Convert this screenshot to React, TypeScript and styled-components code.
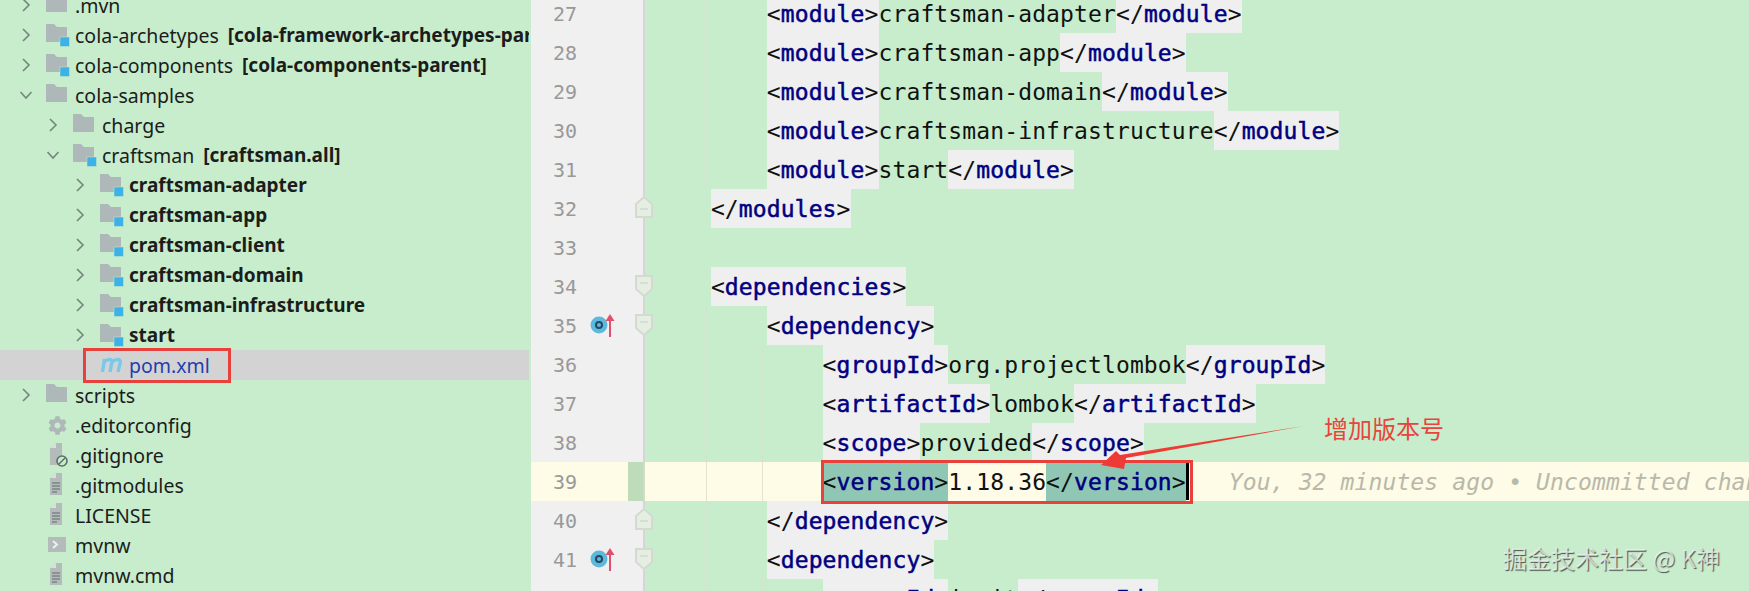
import React from "react";
import styled, { createGlobalStyle } from "styled-components";
import { FaCog } from "react-icons/fa";

const Global = createGlobalStyle`
  html, body { margin: 0; padding: 0; background: #c7edcc; }
`;

const Page = styled.div`
  position: relative;
  width: 1749px;
  height: 591px;
  overflow: hidden;
  display: flex;
  background: #c7edcc;
`;

/* ---------- project tree ---------- */
const Tree = styled.div`
  flex: 0 0 531px;
  width: 531px;
  min-width: 0;
  margin-top: -10px;
  padding-right: 2px;
  box-sizing: border-box;
  overflow: hidden;
  font-family: "Noto Sans", "Open Sans", sans-serif;
  font-size: 19.5px;
  color: #1c1c1c;
`;

const Row = styled.div<{ $depth: number; $selected?: boolean }>`
  height: 30px;
  display: flex;
  align-items: center;
  padding-left: ${(p) => 18 + 27 * p.$depth}px;
  background: ${(p) => (p.$selected ? "#d3d3d3" : "transparent")};
  overflow: hidden;
  white-space: nowrap;
`;

const ChevronBox = styled.span`
  flex: 0 0 16px;
  height: 30px;
  margin-right: 12px;
  display: flex;
  align-items: center;
  justify-content: center;
`;

const IconBox = styled.span`
  flex: 0 0 24px;
  height: 30px;
  margin-right: 5px;
  display: flex;
  align-items: center;
  justify-content: flex-start;
`;

const Label = styled.span<{ $bold?: boolean; $link?: boolean }>`
  font-weight: ${(p) => (p.$bold ? 700 : 400)};
  font-size: ${(p) => (p.$bold ? "19px" : "inherit")};
  color: ${(p) => (p.$link ? "#1f3fae" : "inherit")};
`;

const Strong = styled.b`
  font-weight: 700;
  font-size: 19px;
  margin-left: 9px;
`;

const Chevron = ({ open }: { open?: boolean }) =>
  open ? (
    <svg width="14" height="10" viewBox="0 0 14 10">
      <polyline points="1.5,2 7,8 12.5,2" fill="none" stroke="#75857c" strokeWidth="1.6" />
    </svg>
  ) : (
    <svg width="10" height="14" viewBox="0 0 10 14">
      <polyline points="2,1 8,7 2,13" fill="none" stroke="#75857c" strokeWidth="1.6" />
    </svg>
  );

const Folder = ({ module }: { module?: boolean }) => (
  <svg width="24" height="24" viewBox="0 0 24 24">
    <path d="M0 1h8l3 3h10v15H0z" fill="#aeb8b8" />
    {module && <rect x="14" y="14" width="9.5" height="9.5" fill="#3db2e6" stroke="#c7edcc" strokeWidth="0.5" />}
  </svg>
);

const FileGlyph = ({ ignore }: { ignore?: boolean }) => (
  <svg width="24" height="24" viewBox="0 0 24 24">
    <path d="M4 5l6-5h6v22H4z" fill="#b4bcbb" />
    <path d="M4 5l6-5v5z" fill="#d6e4d8" />
    {ignore ? (
      <>
        <circle cx="16" cy="18" r="5" fill="#c7edcc" stroke="#5f6b69" strokeWidth="1.6" />
        <line x1="13" y1="21" x2="19" y2="15" stroke="#5f6b69" strokeWidth="1.5" />
      </>
    ) : (
      <path d="M6 10h8M6 13h8M6 16h8M6 19h5" stroke="#5f6b69" strokeWidth="1.2" />
    )}
  </svg>
);

const Terminal = () => (
  <svg width="24" height="24" viewBox="0 0 24 24">
    <rect x="2" y="4" width="18" height="15" fill="#b4bcbb" />
    <polyline points="7,8 11,11.5 7,15" fill="none" stroke="#e8f2ea" strokeWidth="2" />
  </svg>
);

const Maven = () => (
  <svg width="24" height="24" viewBox="0 0 24 24">
    <path
      d="M2.5 19l2-13M4 9.5c2-3 7.5-4.5 8-1L10 19M12 9.5c2-3 7.5-4.500 8.300-1 .2 1-.6 3.500-2.300 10.500"
      fill="none"
      stroke="#7ac8ea"
      strokeWidth="3.4"
    />
  </svg>
);

const GearIcon = styled(FaCog)`
  width: 19px;
  height: 19px;
  margin-left: 2px;
  color: #aeb8b8;
`;

type Node = {
  depth: number;
  arrow?: "open" | "closed";
  icon: React.ReactNode;
  label: string;
  bold?: boolean;
  link?: boolean;
  selected?: boolean;
  extra?: string;
};

const nodes: Node[] = [
  { depth: 0, arrow: "closed", icon: <Folder />, label: ".mvn" },
  { depth: 0, arrow: "closed", icon: <Folder module />, label: "cola-archetypes", extra: "[cola-framework-archetypes-parent]" },
  { depth: 0, arrow: "closed", icon: <Folder module />, label: "cola-components", extra: "[cola-components-parent]" },
  { depth: 0, arrow: "open", icon: <Folder />, label: "cola-samples" },
  { depth: 1, arrow: "closed", icon: <Folder />, label: "charge" },
  { depth: 1, arrow: "open", icon: <Folder module />, label: "craftsman", extra: "[craftsman.all]" },
  { depth: 2, arrow: "closed", icon: <Folder module />, label: "craftsman-adapter", bold: true },
  { depth: 2, arrow: "closed", icon: <Folder module />, label: "craftsman-app", bold: true },
  { depth: 2, arrow: "closed", icon: <Folder module />, label: "craftsman-client", bold: true },
  { depth: 2, arrow: "closed", icon: <Folder module />, label: "craftsman-domain", bold: true },
  { depth: 2, arrow: "closed", icon: <Folder module />, label: "craftsman-infrastructure", bold: true },
  { depth: 2, arrow: "closed", icon: <Folder module />, label: "start", bold: true },
  { depth: 2, icon: <Maven />, label: "pom.xml", link: true, selected: true },
  { depth: 0, arrow: "closed", icon: <Folder />, label: "scripts" },
  { depth: 0, icon: <GearIcon />, label: ".editorconfig" },
  { depth: 0, icon: <FileGlyph ignore />, label: ".gitignore" },
  { depth: 0, icon: <FileGlyph />, label: ".gitmodules" },
  { depth: 0, icon: <FileGlyph />, label: "LICENSE" },
  { depth: 0, icon: <Terminal />, label: "mvnw" },
  { depth: 0, icon: <FileGlyph />, label: "mvnw.cmd" },
];

/* ---------- editor ---------- */
const Editor = styled.div`
  flex: 1;
  min-width: 0;
  margin-top: -6px;
  font-family: "DejaVu Sans Mono", "Liberation Mono", monospace;
  font-size: 23px;
  letter-spacing: 0.12px;
  color: #111;
`;

const Line = styled.div<{ $active?: boolean }>`
  height: 39px;
  display: flex;
  background: ${(p) => (p.$active ? "#fefbe6" : "transparent")};
  overflow: hidden;
`;

const Gutter = styled.div<{ $active?: boolean }>`
  position: relative;
  flex: 0 0 114px;
  box-sizing: border-box;
  height: 39px;
  background: ${(p) => (p.$active ? "#fefbe6" : "#f0f0f0")};
  border-right: 2px solid ${(p) => (p.$active ? "#d6dcc4" : "#d6d6d6")};
`;

const LineNumber = styled.span`
  display: block;
  width: 46px;
  text-align: right;
  font-size: 20px;
  letter-spacing: 0;
  line-height: 41px;
  color: #999;
`;

const ChangeMark = styled.span`
  position: absolute;
  right: 0;
  top: 0;
  width: 15px;
  height: 39px;
  background: #bfdcba;
`;

const MarkIcon = styled.svg`
  position: absolute;
  left: 58px;
  top: 6px;
`;

const FoldIcon = styled.svg`
  position: absolute;
  right: -11px;
  z-index: 1;
  top: 8px;
`;

const Code = styled.div`
  position: relative;
  flex: 1;
  min-width: 0;
  padding-left: 10px;
  line-height: 41px;
  white-space: pre;
  overflow: hidden;
`;

const IndentGuide = styled.span<{ $active?: boolean; $at: number }>`
  position: absolute;
  top: 0;
  bottom: 0;
  left: ${(p) => p.$at}px;
  width: 1px;
  background: ${(p) => (p.$active ? "#e6e2d0" : "#d3e3d0")};
`;

const TagBand = styled.span<{ $match?: boolean }>`
  position: relative;
  display: inline-block;
  height: 39px;
  vertical-align: top;
  background: ${(p) => (p.$match ? "#8fc7b4" : "#efefef")};
`;

const TagName = styled.span`
  color: #000080;
  -webkit-text-stroke: 0.5px #000080;
`;

const Caret = styled.span`
  display: inline-block;
  width: 3px;
  height: 37px;
  margin-top: 1px;
  vertical-align: top;
  background: #000;
`;

const Hint = styled.span`
  margin-left: 40px;
  font-style: italic;
  color: #b8b8ab;
`;

const Tag = ({ name, close, match }: { name: string; close?: boolean; match?: boolean }) => (
  <TagBand $match={match}>
    {close ? "</" : "<"}
    <TagName>{name}</TagName>
    {">"}
  </TagBand>
);

const Element = ({ name, text, match }: { name: string; text: string; match?: boolean }) => (
  <>
    <Tag name={name} match={match} />
    {text}
    <Tag name={name} close match={match} />
  </>
);

const FoldStart = () => (
  <FoldIcon width="20" height="22" viewBox="0 0 20 22">
    <path d="M2 1h16v13l-8 7-8-7z" fill="#e4efe2" stroke="#d4dad2" strokeWidth="2" />
    <line x1="6" y1="8" x2="14" y2="8" stroke="#d4dad2" strokeWidth="1.6" />
  </FoldIcon>
);

const FoldEnd = () => (
  <FoldIcon width="20" height="22" viewBox="0 0 20 22" style={{ top: 7 }}>
    <path d="M2 21h16V8l-8-7-8 7z" fill="#e4efe2" stroke="#d4dad2" strokeWidth="2" />
    <line x1="6" y1="13" x2="14" y2="13" stroke="#d4dad2" strokeWidth="1.6" />
  </FoldIcon>
);

const Override = () => (
  <MarkIcon width="30" height="28" viewBox="0 0 30 28">
    <circle cx="10" cy="13" r="8.5" fill="#5cb8dc" />
    <circle cx="10" cy="13" r="3" fill="none" stroke="#24485e" strokeWidth="2" />
    <path d="M21 25V6" stroke="#e0506a" strokeWidth="2" />
    <path d="M16.5 9L21 2l4.5 7z" fill="#e0506a" />
  </MarkIcon>
);

type CodeLine = {
  n: number;
  indent: number;
  body?: React.ReactNode;
  fold?: "start" | "end";
  mark?: boolean;
  guides?: number[];
};

const G1 = 61;
const G2 = 117;

const lines: CodeLine[] = [
  { n: 27, indent: 8, guides: [G1], body: <Element name="module" text="craftsman-adapter" /> },
  { n: 28, indent: 8, guides: [G1], body: <Element name="module" text="craftsman-app" /> },
  { n: 29, indent: 8, guides: [G1], body: <Element name="module" text="craftsman-domain" /> },
  { n: 30, indent: 8, guides: [G1], body: <Element name="module" text="craftsman-infrastructure" /> },
  { n: 31, indent: 8, guides: [G1], body: <Element name="module" text="start" /> },
  { n: 32, indent: 4, fold: "end", body: <Tag name="modules" close /> },
  { n: 33, indent: 0 },
  { n: 34, indent: 4, fold: "start", body: <Tag name="dependencies" /> },
  { n: 35, indent: 8, fold: "start", mark: true, guides: [G1], body: <Tag name="dependency" /> },
  { n: 36, indent: 12, guides: [G1, G2], body: <Element name="groupId" text="org.projectlombok" /> },
  { n: 37, indent: 12, guides: [G1, G2], body: <Element name="artifactId" text="lombok" /> },
  { n: 38, indent: 12, guides: [G1, G2], body: <Element name="scope" text="provided" /> },
  {
    n: 39,
    indent: 12,
    guides: [G1, G2],
    body: (
      <>
        <Element name="version" text="1.18.36" match />
        <Caret />
        <Hint>You, 32 minutes ago • Uncommitted changes</Hint>
      </>
    ),
  },
  { n: 40, indent: 8, fold: "end", guides: [G1], body: <Tag name="dependency" close /> },
  { n: 41, indent: 8, fold: "start", mark: true, guides: [G1], body: <Tag name="dependency" /> },
  { n: 42, indent: 12, guides: [G1, G2], body: <Element name="groupId" text="junit" /> },
];

/* ---------- annotations ---------- */
const RedBox = styled.div<{ $x: number; $y: number; $w: number; $h: number }>`
  position: absolute;
  left: ${(p) => p.$x}px;
  top: ${(p) => p.$y}px;
  width: ${(p) => p.$w}px;
  height: ${(p) => p.$h}px;
  box-sizing: border-box;
  border: 3px solid #e8403a;
  pointer-events: none;
`;

const ArrowSvg = styled.svg`
  position: absolute;
  left: 0;
  top: 0;
  pointer-events: none;
`;

const Note = styled.div`
  position: absolute;
  left: 1324px;
  top: 412px;
  font-family: "Noto Sans CJK SC", "Noto Sans", sans-serif;
  font-size: 24px;
  line-height: 32px;
  color: #e8443c;
`;

const Watermark = styled.div`
  position: absolute;
  left: 1503px;
  top: 541px;
  font-family: "Noto Sans CJK SC", "Noto Sans", sans-serif;
  font-size: 24px;
  line-height: 34px;
  white-space: nowrap;
  color: rgba(245, 245, 245, 0.75);
  text-shadow: 1px 1px 1px rgba(0, 0, 0, 0.65);
`;

export default function App() {
  return (
    <Page>
      <Global />
      <Tree>
        {nodes.map((node) => (
          <Row key={node.label} $depth={node.depth} $selected={node.selected}>
            <ChevronBox>{node.arrow && <Chevron open={node.arrow === "open"} />}</ChevronBox>
            <IconBox>{node.icon}</IconBox>
            <Label $bold={node.bold} $link={node.link}>
              {node.label}
            </Label>
            {node.extra && <Strong>{node.extra}</Strong>}
          </Row>
        ))}
      </Tree>
      <Editor>
        {lines.map((line) => {
          const active = line.n === 39;
          return (
            <Line key={line.n} $active={active}>
              <Gutter $active={active}>
                <LineNumber>{line.n}</LineNumber>
                {active && <ChangeMark />}
                {line.mark && <Override />}
                {line.fold === "start" && <FoldStart />}
                {line.fold === "end" && <FoldEnd />}
              </Gutter>
              <Code>
                {line.guides?.map((g) => (
                  <IndentGuide key={g} $at={g} $active={active} />
                ))}
                {" ".repeat(line.indent)}
                {line.body}
              </Code>
            </Line>
          );
        })}
      </Editor>
      <RedBox $x={83} $y={348} $w={148} $h={35} />
      <RedBox $x={821} $y={460} $w={372} $h={44} />
      <ArrowSvg width="1749" height="591" viewBox="0 0 1749 591">
        <path d="M1304 426L1126 458L1124 469L1101 465L1116 451L1120 455Z" fill="#ee3b35" />
      </ArrowSvg>
      <Note>增加版本号</Note>
      <Watermark>掘金技术社区 @ K神</Watermark>
    </Page>
  );
}
